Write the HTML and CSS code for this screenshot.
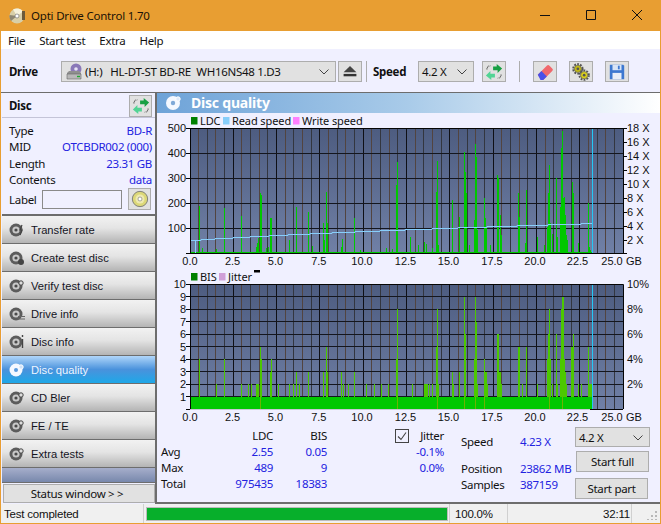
FILE: index.html
```html
<!DOCTYPE html>
<html lang="en">
<head>
<meta charset="utf-8">
<title>Opti Drive Control 1.70</title>
<link rel="stylesheet" href="styles.css">
</head>
<body>
<svg class="defs" width="0" height="0" aria-hidden="true">
  <defs>
    <symbol id="sync" viewBox="0 0 20 20">
      <path d="M9 4h4V1l6 5-5 5V8H9z" fill="#18a044"/>
      <path d="M11 16H7v3L1 14l5-5v3h5z" fill="#52d494"/>
      <path d="M2 7l1-3 3-1M18 13l-1 3-3 1" fill="none" stroke="#333" stroke-width="1.200" stroke-dasharray="1 1"/>
    </symbol>
    <symbol id="navdisc" viewBox="0 0 16 16">
      <circle cx="7" cy="8" r="6.500" fill="#5c5c5c"/>
      <circle cx="7" cy="8" r="3.600" fill="#c8c8c8"/>
      <circle cx="7" cy="8" r="1.600" fill="#4a4a4a"/>
    </symbol>
  </defs>
</svg>
<div class="window">
  <header class="titlebar">
    <svg class="app-icon" viewBox="0 0 18 18"><circle cx="8" cy="9" r="7.500" fill="#d8cfa8"/><path d="M8 9L4 2.500A7.500 7.500 0 0 1 14 4.500z" fill="#f6f2dc"/><path d="M8 9L2 14A7.500 7.500 0 0 1 .6 8z" fill="#8d8672"/><circle cx="8" cy="9" r="2" fill="#fff" stroke="#777" stroke-width=".7"/><path d="M13 4h3v9h-3z" fill="#6b5a3a"/></svg>
    <span class="title-text">Opti Drive Control 1.70</span>
    <div class="win-buttons">
      <svg viewBox="0 0 46 31"><path d="M18 15.500h10" stroke="#111" fill="none"/></svg>
      <svg viewBox="0 0 46 31"><path d="M18.500 10.500h9v9h-9z" stroke="#111" fill="none"/></svg>
      <svg viewBox="0 0 46 31"><path d="M18 10l10 10M28 10l-10 10" stroke="#111" fill="none"/></svg>
    </div>
  </header>
  <nav class="menubar"><span>File</span><span>Start test</span><span>Extra</span><span>Help</span></nav>
  <div class="toolbar">
    <b class="tb-label drive-label">Drive</b>
    <div class="combo drive-combo">
      <svg class="drive-icon" viewBox="0 0 18 18"><circle cx="11" cy="6" r="5.500" fill="#8a78b8"/><circle cx="11" cy="6" r="1.800" fill="#e8e4f4"/><path d="M2 10l2-2h10l2 2v6H2z" fill="#8f8f8f"/><path d="M2 11h14v5H2z" fill="#b8b8b8" stroke="#666" stroke-width=".6"/><path d="M12 13.500h3" stroke="#1fa82f" stroke-width="1.400"/></svg>
      <span class="combo-text">(H:)&nbsp;&nbsp; HL-DT-ST BD-RE&nbsp; WH16NS48 1.D3</span>
      <svg class="chev" viewBox="0 0 10 6"><path d="M.5.500L5 5 9.500.500" fill="none" stroke="#444"/></svg>
    </div>
    <button class="tool eject"><svg viewBox="0 0 20 16"><path d="M10 1l8 8H2z" fill="#444"/><path d="M2 11h16v3H2z" fill="#333"/></svg></button>
    <i class="sep sep-a"></i>
    <b class="tb-label speed-label">Speed</b>
    <div class="combo speed-combo"><span class="combo-text">4.2 X</span><svg class="chev" viewBox="0 0 10 6"><path d="M.5.500L5 5 9.500.500" fill="none" stroke="#444"/></svg></div>
    <button class="tool sync-tool"><svg viewBox="0 0 20 20"><use href="#sync"/></svg></button>
    <i class="sep sep-b"></i>
    <button class="tool eraser"><svg viewBox="0 0 20 20"><path d="M2 13L12 3a2 2 0 0 1 3 0l3 3a2 2 0 0 1 0 3L8 19H6z" fill="#f0686c"/><path d="M2 13l4-4 6 6-4 4H5z" fill="#4a50e8"/></svg></button>
    <button class="tool gears"><svg viewBox="0 0 20 20"><circle cx="6.500" cy="6.500" r="5.200" fill="none" stroke="#555" stroke-width="2.200" stroke-dasharray="2 1.300"/><circle cx="6.500" cy="6.500" r="4" fill="#c4bc14" stroke="#555" stroke-width=".7"/><circle cx="6.500" cy="6.500" r="1.500" fill="#555"/><circle cx="13.500" cy="13.500" r="5.200" fill="none" stroke="#555" stroke-width="2.200" stroke-dasharray="2 1.300"/><circle cx="13.500" cy="13.500" r="4" fill="#dcd01c" stroke="#555" stroke-width=".7"/><circle cx="13.500" cy="13.500" r="1.500" fill="#555"/></svg></button>
    <button class="tool save"><svg viewBox="0 0 20 20"><path d="M2 2h15l1 1v15H2z" fill="#3d78d0"/><path d="M5 2h10v6H5z" fill="#d8e4f6"/><path d="M11 3h2v4h-2z" fill="#3d78d0"/><path d="M5 11h10v7H5z" fill="#e8eef8"/></svg></button>
  </div>
  <main class="main">
    <aside class="sidebar">
      <section class="disc-panel">
        <div class="disc-head">
          <b>Disc</b>
          <button class="tool small"><svg viewBox="0 0 20 20"><use href="#sync"/></svg></button>
        </div>
        <dl class="disc-info">
          <dt>Type</dt><dd>BD-R</dd>
          <dt>MID</dt><dd>OTCBDR002 (000)</dd>
          <dt>Length</dt><dd>23.31 GB</dd>
          <dt>Contents</dt><dd>data</dd>
        </dl>
        <div class="label-row">
          <span>Label</span><div class="label-input"></div>
          <button class="tool small"><svg viewBox="0 0 20 20"><circle cx="10" cy="10" r="8.500" fill="#dcd878" stroke="#777"/><circle cx="10" cy="10" r="5" fill="#eeeab0"/><circle cx="10" cy="10" r="2.200" fill="#fff" stroke="#777" stroke-width=".7"/></svg></button>
        </div>
      </section>
      <div class="nav">
        <a class="nav-btn"><svg viewBox="0 0 16 16"><use href="#navdisc"/><path d="M13 3l-2 5h2l-2 5" fill="none" stroke="#444" stroke-width="1.200"/></svg>Transfer rate</a>
        <a class="nav-btn"><svg viewBox="0 0 16 16"><use href="#navdisc"/><circle cx="12" cy="12" r="3" fill="#444"/></svg>Create test disc</a>
        <a class="nav-btn"><svg viewBox="0 0 16 16"><use href="#navdisc"/><circle cx="12" cy="5" r="2.200" fill="#ddd" stroke="#444"/></svg>Verify test disc</a>
        <a class="nav-btn"><svg viewBox="0 0 16 16"><use href="#navdisc"/><path d="M9 10h7v1H9zM9 12.500h7v1H9z" fill="#666"/></svg>Drive info</a>
        <a class="nav-btn"><svg viewBox="0 0 16 16"><use href="#navdisc"/><path d="M13.500 1v2M13.500 5v9" stroke="#444" stroke-width="1.400"/></svg>Disc info</a>
        <a class="nav-btn active"><svg viewBox="0 0 16 16"><circle cx="7" cy="8" r="6.500" fill="#f4f8ff"/><circle cx="7" cy="8" r="2" fill="#5a9ade"/><circle cx="12" cy="5" r="2.200" fill="#cfe2f8" stroke="#fff"/></svg>Disc quality</a>
        <a class="nav-btn"><svg viewBox="0 0 16 16"><use href="#navdisc"/><circle cx="12" cy="5" r="2.200" fill="#ddd" stroke="#444"/></svg>CD Bler</a>
        <a class="nav-btn"><svg viewBox="0 0 16 16"><use href="#navdisc"/><circle cx="12" cy="5" r="2.200" fill="#ddd" stroke="#444"/></svg>FE / TE</a>
        <a class="nav-btn"><svg viewBox="0 0 16 16"><use href="#navdisc"/><circle cx="12" cy="5" r="2.200" fill="#ddd" stroke="#444"/></svg>Extra tests</a>
        <div class="nav-fill"></div>
      </div>
      <div class="status-wrap"><button class="status-btn">Status window &gt; &gt;</button></div>
    </aside>
    <section class="content">
      <h1 class="band">
        <svg viewBox="0 0 16 16"><circle cx="8" cy="8" r="7" fill="#f4f8ff"/><circle cx="8" cy="8" r="2.200" fill="#7fa9d8"/><circle cx="13" cy="4" r="2.200" fill="#dfeafa" stroke="#fff"/></svg>
        <span>Disc quality</span>
      </h1>
      <svg class="charts" viewBox="157 113 503 311">
        <defs>
          <linearGradient id="plot" x1="0" y1="0" x2="0" y2="1"><stop offset="0" stop-color="#4d5c80"/><stop offset="1" stop-color="#7080a6"/></linearGradient>
          <g id="vlines">
            <path class="v-odd" d="M198.500 0v125M215.500 0v125M241.500 0v125M259.500 0v125M285.500 0v125M302.500 0v125M328.500 0v125M345.500 0v125M371.500 0v125M389.500 0v125M415.500 0v125M432.500 0v125M458.500 0v125M475.500 0v125M501.500 0v125M519.500 0v125M545.500 0v125M562.500 0v125M588.500 0v125M605.500 0v125"/>
            <path class="v-even" d="M207.500 0v125M224.500 0v125M250.500 0v125M267.500 0v125M293.500 0v125M311.500 0v125M337.500 0v125M354.500 0v125M380.500 0v125M397.500 0v125M423.500 0v125M441.500 0v125M467.500 0v125M484.500 0v125M510.500 0v125M527.500 0v125M553.500 0v125M571.500 0v125M597.500 0v125M614.500 0v125"/>
            <path class="v-major" d="M233.500 0v125M276.500 0v125M319.500 0v125M363.500 0v125M406.500 0v125M449.500 0v125M493.500 0v125M536.500 0v125M579.500 0v125"/>
          </g>
        </defs>

        <g class="legend">
          <rect x="191" y="117" width="6.500" height="7.500" fill="#008000"/><text x="200" y="125">LDC</text>
          <rect x="223" y="117" width="6.500" height="7.500" fill="#87cefa"/><text x="232" y="125">Read speed</text>
          <rect x="293" y="117" width="6.500" height="7.500" fill="#ff80ff"/><text x="302" y="125">Write speed</text>
          <rect x="191" y="273" width="6.500" height="7.500" fill="#008000"/><text x="200" y="281">BIS</text>
          <rect x="219" y="273" width="6.500" height="7.500" fill="#d0a0d8"/><text x="228" y="281">Jitter</text>
          <rect x="254" y="270" width="6" height="2.500" fill="#000"/>
        </g>

        <rect x="190" y="128" width="433" height="125" fill="url(#plot)"/>
        <use href="#vlines" y="128"/>
        <path class="hgrid" d="M190 153.500h433M190 178.500h433M190 203.500h433M190 228.500h433"/>
        <path class="spikes" d="M190 252.500H593M199.500 253V206M202.500 253V248M216.500 253V249M224.500 253V208M241.500 253V216M256.500 253V247M257.500 253V243M258.500 253V238M260.500 253V193M261.500 253V195M266.500 253V248M268.500 253V247M270.500 253V218M271.500 253V218M289.500 253V240M296.500 253V207M308.500 253V212M312.500 253V246M323.500 253V223M324.500 253V240M326.500 253V192M327.500 253V223M341.500 253V247M342.500 253V239M354.500 253V218M360.500 253V250M386.500 253V248M392.500 253V249M396.500 253V185M397.500 253V162M410.500 253V237M418.500 253V245M424.500 253V242M426.500 253V244M432.500 253V248M436.500 253V192M437.500 253V161M438.500 253V245M452.500 253V200M459.500 253V217M464.500 253V152M465.500 253V172M466.500 253V193M469.500 253V245M474.500 253V220M475.500 253V144M476.500 253V157M477.500 253V230M484.500 253V198M485.500 253V218M486.500 253V228M490.500 253V245M497.500 253V175M498.500 253V178M500.500 253V215M501.500 253V235M518.500 253V193M519.500 253V217M525.500 253V243M526.500 253V190M537.500 253V237M544.500 253V245M547.500 253V227M548.500 253V193M549.500 253V165M550.500 253V223M552.500 253V234M556.500 253V178M557.500 253V237M560.500 253V207M561.500 253V148M562.500 253V131M563.500 253V198M564.500 253V197M565.500 253V215M566.500 253V235M567.500 253V240M572.500 253V182M573.500 253V193M578.500 253V243M588.500 253V203M589.500 253V247M590.500 253V250"/>
        <path class="speed-line" d="M190 240.500H201V239.500H215V238.500H233V237.500H250V236.500H269V235.500H288V234.500H310V233.500H332V232.500H355V231.500H380V230.500H405V229.500H432V228.500H458V227.500H487V226.500H517V225.500H548V224.500H581V223.500H592"/>
        <path class="speed-line" d="M195.500 241V253"/>
        <path class="cursor" d="M592.500 128V253"/>
        <path class="frame" d="M186 128.500H623.500V253M190.500 128V253M186 153.500h4M186 178.500h4M186 203.500h4M186 228.500h4M186 253.500H627M623 142.500h4M623 128.500h4M623 156.500h4M623 170.500h4M623 184.500h4M623 198.500h4M623 212.500h4M623 226.500h4M623 240.500h4"/>
        <g class="axis end">
          <text x="186" y="132">500</text><text x="186" y="157">400</text><text x="186" y="182">300</text><text x="186" y="207">200</text><text x="186" y="232">100</text>
        </g>
        <g class="axis">
          <text x="627" y="132">18 X</text><text x="627" y="146">16 X</text><text x="627" y="160">14 X</text><text x="627" y="174">12 X</text><text x="627" y="188">10 X</text><text x="627" y="202">8 X</text><text x="627" y="216">6 X</text><text x="627" y="230">4 X</text><text x="627" y="244">2 X</text>
          <text x="626" y="265">GB</text><text x="626" y="421">GB</text>
        </g>
        <g class="axis mid">
          <text x="190" y="265">0.0</text><text x="232.600" y="265">2.5</text><text x="275.500" y="265">5.0</text><text x="318.800" y="265">7.5</text><text x="362" y="265">10.0</text><text x="405.500" y="265">12.5</text><text x="448.500" y="265">15.0</text><text x="492" y="265">17.5</text><text x="535" y="265">20.0</text><text x="577.500" y="265">22.5</text><text x="612" y="265">25.0</text>
          <text x="190" y="421">0.0</text><text x="232.600" y="421">2.5</text><text x="275.500" y="421">5.0</text><text x="318.800" y="421">7.5</text><text x="362" y="421">10.0</text><text x="405.500" y="421">12.5</text><text x="448.500" y="421">15.0</text><text x="492" y="421">17.5</text><text x="535" y="421">20.0</text><text x="577.500" y="421">22.5</text><text x="612" y="421">25.0</text>
        </g>

        <rect x="190" y="284" width="433" height="125" fill="url(#plot)"/>
        <use href="#vlines" y="284"/>
        <path class="hgrid" d="M190 296.500h433M190 309.500h433M190 321.500h433M190 334.500h433M190 346.500h433M190 359.500h433M190 371.500h433M190 384.500h433M190 396.500h433"/>
        <rect x="190" y="397" width="403" height="12" fill="#00c800"/>
        <path class="spikes bis" d="M199.500 397V359M216.500 397V384M224.500 397V359M241.500 397V384M248.500 397V384M251.500 397V384M256.500 397V384M257.500 397V384M258.500 397V384M260.500 397V347M261.500 397V359M270.500 397V372M271.500 397V359M278.500 397V384M289.500 397V384M293.500 397V384M296.500 397V372M299.500 397V384M308.500 397V372M323.500 397V372M326.500 397V347M327.500 397V372M341.500 397V372M343.500 397V384M348.500 397V384M354.500 397V372M366.500 397V384M374.500 397V384M381.500 397V384M388.500 397V384M396.500 397V359M397.500 397V309M412.500 397V384M424.500 397V384M425.500 397V384M426.500 397V384M427.500 397V384M429.500 397V384M432.500 397V384M436.500 397V347M437.500 397V309M438.500 397V384M452.500 397V372M453.500 397V384M459.500 397V372M464.500 397V297M465.500 397V334M474.500 397V359M475.500 397V297M476.500 397V322M477.500 397V384M484.500 397V359M485.500 397V372M486.500 397V372M487.500 397V384M497.500 397V334M498.500 397V334M499.500 397V372M500.500 397V372M501.500 397V384M518.500 397V347M519.500 397V347M522.500 397V384M526.500 397V347M537.500 397V384M547.500 397V359M548.500 397V334M549.500 397V309M550.500 397V359M552.500 397V384M556.500 397V334M557.500 397V384M560.500 397V359M561.500 397V309M562.500 397V297M563.500 397V297M564.500 397V359M565.500 397V372M566.500 397V384M571.500 397V347M572.500 397V347M573.500 397V334M578.500 397V384M581.500 397V384M588.500 397V347M589.500 397V384M590.500 397V384M591.500 397V384"/>
        <path class="bis-in" d="M260.500 397V409M397.500 397V409M437.500 397V409M464.500 397V409M475.500 397V409M484.500 397V409M562.500 397V409M549.500 397V409"/>
        <path class="cursor" d="M592.500 284V409"/>
        <path class="frame" d="M186 284.500H623.500V409M190.500 284V409M186 296.500h4M186 309.500h4M186 321.500h4M186 334.500h4M186 346.500h4M186 359.500h4M186 371.500h4M186 384.500h4M186 396.500h4M186 409.500H190"/>
        <path class="floor" d="M190 409.500H590"/>
        <path class="frame" d="M590 409.500H623"/>
        <g class="axis end">
          <text x="186" y="288">10</text><text x="186" y="301">9</text><text x="186" y="313">8</text><text x="186" y="326">7</text><text x="186" y="338">6</text><text x="186" y="351">5</text><text x="186" y="363">4</text><text x="186" y="376">3</text><text x="186" y="388">2</text><text x="186" y="401">1</text>
        </g>
        <g class="axis">
          <text x="627" y="288">10%</text><text x="627" y="313">8%</text><text x="627" y="338">6%</text><text x="627" y="363">4%</text><text x="627" y="388">2%</text>
        </g>
      </svg>
      <div class="stats">
        <div class="stat-table">
          <span></span><span class="hd">LDC</span><span class="hd">BIS</span>
          <span class="lbl">Avg</span><span class="val">2.55</span><span class="val">0.05</span>
          <span class="lbl">Max</span><span class="val">489</span><span class="val">9</span>
          <span class="lbl">Total</span><span class="val">975435</span><span class="val">18383</span>
        </div>
        <div class="jitter">
          <span class="check"><svg viewBox="0 0 12 12"><path d="M2 6.500l3 3 5-7" fill="none" stroke="#444" stroke-width="1.100"/></svg></span>
          <div class="jitter-col">
            <span class="hd">Jitter</span>
            <span class="val">-0.1%</span>
            <span class="val">0.0%</span>
          </div>
        </div>
        <div class="run-info">
          <span class="lbl speed-row">Speed</span><span class="val speed-row">4.23 X</span>
          <span class="lbl">Position</span><span class="val">23862 MB</span>
          <span class="lbl">Samples</span><span class="val">387159</span>
        </div>
        <div class="actions">
          <div class="combo action-combo"><span class="combo-text">4.2 X</span><svg class="chev" viewBox="0 0 10 6"><path d="M.5.500L5 5 9.500.500" fill="none" stroke="#444"/></svg></div>
          <button class="act full">Start full</button>
          <button class="act part">Start part</button>
        </div>
      </div>
    </section>
  </main>
  <footer class="statusbar">
    <span class="st-msg">Test completed</span>
    <div class="st-progress"><div class="st-bar"></div></div>
    <span class="st-pct">100.0%</span>
    <span class="st-empty"></span>
    <span class="st-time">32:11</span>
    <svg class="grip" viewBox="0 0 10 10"><path d="M8 1h2v2H8zM4 5h2v2H4zM8 5h2v2H8zM0 9h2v1H0zM4 9h2v1H4zM8 9h2v1H8z" fill="#b8b8b8"/></svg>
  </footer>
</div>
</body>
</html>
```

FILE: styles.css
```css
* { box-sizing: border-box; }
html, body { margin: 0; padding: 0; }
body { width: 661px; height: 524px; overflow: hidden; font-family: "Noto Sans", "Liberation Sans", sans-serif; font-size: 11.500px; letter-spacing: -.3px; color: #111; }
.defs { position: absolute; }
button { font: inherit; letter-spacing: inherit; color: inherit; padding: 0; }
svg { display: block; }

.window { width: 661px; height: 524px; display: flex; flex-direction: column; border: 1px solid #e89e32; border-top: 0; background: #f0f0ff; position: relative; }

.titlebar { height: 31px; flex: none; background: #e89e32; display: flex; align-items: center; padding-left: 8px; }
.app-icon { width: 18px; height: 18px; margin-right: 4px; }
.title-text { letter-spacing: -.2px; color: #1a1206; }
.win-buttons { margin-left: auto; display: flex; }
.win-buttons svg { width: 46px; height: 31px; }

.menubar { height: 18px; flex: none; background: #fff; display: flex; align-items: center; gap: 14px; padding-left: 7px; }

.toolbar { height: 43px; flex: none; display: flex; align-items: center; padding: 2px 0 0 8px; }
.tb-label { font-weight: 700; }
.drive-label { width: 52px; }
.combo { height: 21px; background: #e1e1e1; border: 1px solid #adadad; display: flex; align-items: center; position: relative; }
.combo-text { white-space: nowrap; }
.chev { position: absolute; right: 6px; top: 7px; width: 10px; height: 6px; }
.drive-combo { width: 275px; padding-left: 3px; }
.drive-icon { width: 18px; height: 18px; margin-right: 2px; }
.tool { width: 24px; height: 21px; flex: none; background: #e1e1e1; border: 1px solid #adadad; display: flex; align-items: center; justify-content: center; }
.tool svg { width: 18px; height: 18px; }
.eject { margin-left: 2px; }
.eject svg { width: 16px; height: 13px; }
.sep { width: 1px; height: 21px; background: #adadad; flex: none; }
.sep-a { margin-left: 4px; }
.speed-label { margin-left: 6px; width: 45px; }
.speed-combo { width: 56px; padding-left: 3px; }
.sync-tool { margin-left: 8px; }
.sep-b { margin: 0 13px 0 13px; }
.gears, .save { margin-left: 12px; }

.main { flex: 1; min-height: 0; display: flex; border-top: 1px solid #6d6d6d; }

.sidebar { width: 156px; flex: none; display: flex; flex-direction: column; padding-left: 1px; border-right: 2px solid #6d6d6d; }
.disc-panel { height: 123px; flex: none; border-bottom: 2px solid #6d6d6d; }
.disc-head { height: 25px; display: flex; align-items: center; justify-content: space-between; padding: 1px 3px 0 7px; border-bottom: 1px solid #c4c4d8; }
.small { width: 23px; height: 22px; }
.disc-info { margin: 4px 3px 0 7px; display: grid; grid-template-columns: auto 1fr; grid-auto-rows: 16.500px; align-items: center; }
.disc-info dt { margin: 0; }
.disc-info dd { margin: 0; text-align: right; color: #2222e0; }
.label-row { display: flex; align-items: center; margin: 0 3px 0 7px; }
.label-row span { width: 33px; }
.label-input { width: 80px; height: 19px; background: #f0f0ff; border: 1px solid #8a8a8a; margin-right: 6px; }

.nav { height: 266px; flex: none; display: flex; flex-direction: column; background: #6d6d6d; }
.nav-btn { height: 27px; margin-bottom: 1px; flex: none; display: flex; align-items: center; gap: 6px; padding-left: 7px; font-family: "Liberation Sans", sans-serif; font-size: 11.200px; letter-spacing: 0; background: linear-gradient(#f2f2f2, #e4e4e4 45%, #b4b4b4); color: #14141e; }
.nav-btn svg { width: 16px; height: 16px; flex: none; }
.nav-btn.active { background: linear-gradient(#b0d6fa, #4a92dc 50%, #1ea8e8); color: #eef5ff; }
.nav-fill { flex: 1; background: linear-gradient(#a6aecb, #7888ac); }
.status-wrap { flex: 1; padding: 1px 0 0 1px; border-top: 1px solid #6d6d6d; }
.status-btn { display: block; width: 152px; height: 19px; background: #e1e1e1; border: 1px solid #adadad; padding-right: 4px; }

.content { flex: 1; min-width: 0; display: flex; flex-direction: column; border-bottom: 2px solid #6d6d6d; }
.band { margin: 0; height: 20px; flex: none; display: flex; align-items: center; gap: 10px; padding-left: 8px; background: linear-gradient(90deg, #6ea3d8, #a9cbe9 50%, #fff); color: #fff; font-size: 14px; letter-spacing: -.2px; font-weight: 700; }
.band svg { width: 16px; height: 16px; }
.band span { margin-top: -2px; }
.charts { width: 503px; height: 311px; flex: none; font-family: "Liberation Sans", sans-serif; letter-spacing: 0; }
.legend text { font-family: "Noto Sans", sans-serif; font-size: 11px; letter-spacing: -.1px; fill: #111; }
.axis text { font-size: 11px; fill: #111; }
.axis.end text { text-anchor: end; }
.axis.mid text { text-anchor: middle; }
.hgrid { stroke: #14161e; fill: none; }
.v-odd { stroke: #524440; fill: none; }
.v-even { stroke: #33363f; fill: none; }
.v-major { stroke: #0f1016; fill: none; }
.frame { stroke: #050505; fill: none; }
.spikes { stroke: #00c800; fill: none; }
.spikes.bis { stroke: #4cc800; }
.bis-in { stroke: #6cb400; fill: none; }
.speed-line { stroke: #87cefa; fill: none; }
.cursor { stroke: #25c8f5; fill: none; }
.floor { stroke: #c8c8d4; fill: none; }

.stats { flex: 1; display: flex; position: relative; }
.val { color: #2222e0; }
.stat-table { margin: 3px 0 0 4px; display: grid; grid-template-columns: 41px 71px 54px; grid-auto-rows: 16px; align-items: center; white-space: nowrap; }
.stat-table .hd, .stat-table .val { text-align: right; }
.jitter { margin: 5px 0 0 68px; display: flex; gap: 9px; }
.check { width: 14px; height: 14px; border: 1px solid #444; background: #f0f0ff; }
.check svg { width: 12px; height: 12px; }
.jitter-col { width: 26px; margin-top: -1px; display: flex; flex-direction: column; align-items: flex-end; line-height: 16px; white-space: nowrap; }
.run-info { margin: 4px 0 0 17px; width: 114px; display: grid; grid-template-columns: 59px 1fr; grid-auto-rows: 16px; align-items: center; white-space: nowrap; }
.run-info .speed-row { height: 32px; line-height: 32px; margin-top: -4px; grid-row: span 2; }
.actions { width: 76px; display: flex; flex-direction: column; padding-top: 3px; }
.action-combo { width: 75px; height: 20px; padding-left: 3px; }
.act { display: block; height: 21px; width: 73px; background: #e1e1e1; border: 1px solid #adadad; }
.full { margin: 4px 0 0 1px; }
.part { margin: 6px 0 0 0; }

.statusbar { height: 19px; flex: none; display: flex; align-items: stretch; background: #f0f0f0; font-family: "Liberation Sans", sans-serif; font-size: 11.500px; letter-spacing: -.2px; }
.st-msg { width: 143px; padding-left: 3px; line-height: 20px; border-right: 1px solid #d0d0d0; }
.st-progress { width: 306px; padding: 4px 2px 3px 3px; border-right: 1px solid #d0d0d0; }
.st-bar { height: 100%; background: #07af2b; outline: 1px solid #bcbcbc; }
.st-pct { width: 58px; padding-left: 5px; line-height: 20px; border-right: 1px solid #d0d0d0; }
.st-empty { flex: 1; }
.st-time { width: 29px; line-height: 20px; border-right: 1px solid #d0d0d0; margin-right: 28px; }
.grip { position: absolute; right: 3px; bottom: 3px; width: 10px; height: 10px; }
```
